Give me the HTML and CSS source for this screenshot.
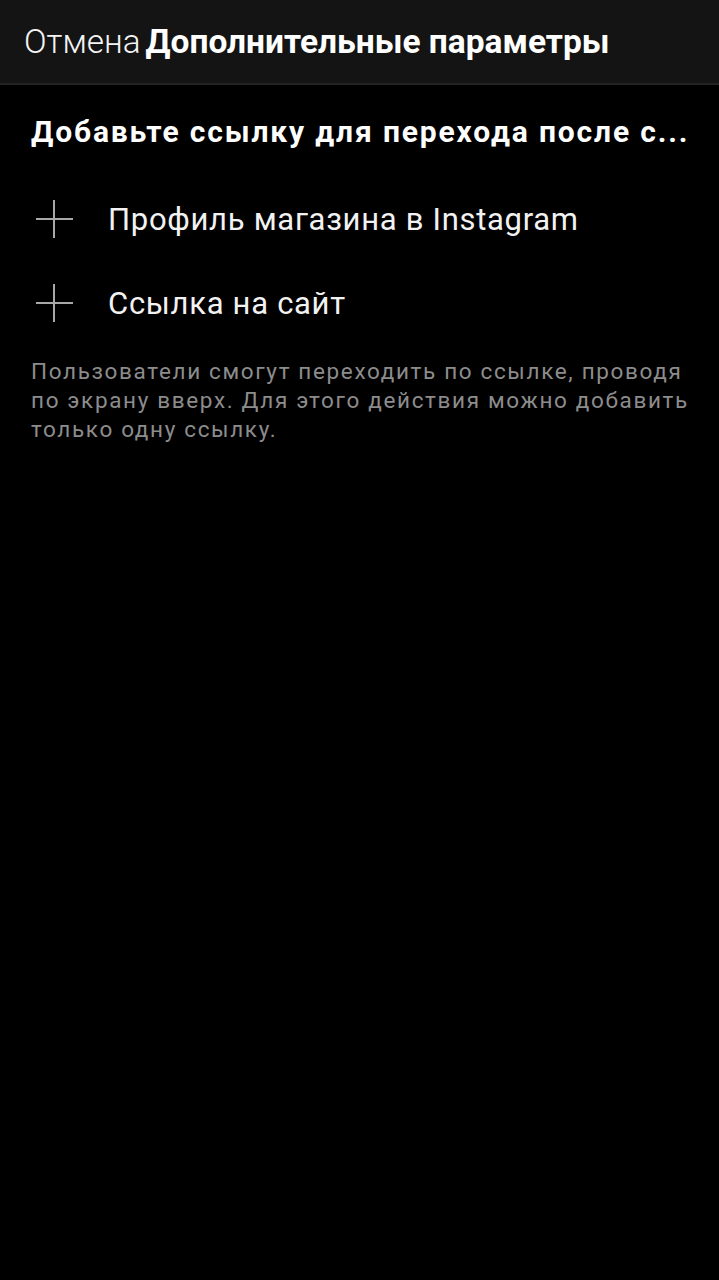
FILE: index.html
```html
<!DOCTYPE html>
<html lang="ru">
<head>
    <meta charset="utf-8">
    <meta name="viewport" content="width=device-width, initial-scale=1.0">
    <title>Дополнительные параметры</title>
    <link rel="stylesheet" href="styles.css">
</head>
<body>
    <header class="topbar">
        <span class="cancel">Отмена</span>
        <h1 class="title">Дополнительные параметры</h1>
    </header>
    <main class="content">
        <h2 class="section-title">Добавьте ссылку для перехода после с...</h2>

        <ul class="links">
            <li class="link-row">
                <span class="plus"></span>
                <span class="link-label">Профиль магазина в Instagram</span>
            </li>
            <li class="link-row">
                <span class="plus"></span>
                <span class="link-label">Ссылка на сайт</span>
            </li>
        </ul>

        <p class="hint">Пользователи смогут переходить по ссылке, проводя по экрану вверх. Для этого действия можно добавить только одну ссылку.</p>
    </main>
</body>
</html>
```

FILE: styles.css
```css
* {
    margin: 0;
    padding: 0;
    box-sizing: border-box;
}

html, body {
    background-color: #000;
    height: 100%;
}

body {
    font-family: Roboto, "Liberation Sans", sans-serif;
    color: #f2f2f2;
}

/* Top bar */
.topbar {
    display: flex;
    align-items: center;
    gap: 5px;
    height: 85px;
    padding: 0 24px 0;
    background-color: #141414;
    border-bottom: 2px solid #232323;
}

.cancel {
    font-size: 33.3px;
    font-weight: 300;
    color: #f4f4f4;
}

.title {
    font-size: 33.5px;
    font-weight: 700;
    color: #fff;
}

/* Content */
.content {
    padding: 27px 31px 0;
}

.section-title {
    font-size: 30px;
    font-weight: 700;
    letter-spacing: 1.85px;
    color: #fff;
    white-space: nowrap;
    line-height: 40px;
}

.links {
    list-style: none;
    margin-top: 25px;
}

.link-row {
    display: flex;
    align-items: center;
    height: 84px;
}

.plus {
    position: relative;
    width: 37px;
    height: 38px;
    margin-left: 5px;
    margin-right: 35px;
    flex-shrink: 0;
}

.plus::before,
.plus::after {
    content: "";
    position: absolute;
    background-color: #a8a8a8;
}

.plus::before {
    left: 0;
    right: 0;
    top: 18px;
    height: 2px;
}

.plus::after {
    top: 0;
    bottom: 0;
    left: 17px;
    width: 2px;
}

.link-label {
    font-size: 31px;
    font-weight: 400;
    letter-spacing: 0.7px;
    color: #f2f2f2;
}

.hint {
    margin-top: 12px;
    margin-right: -14px;
    font-size: 22.5px;
    line-height: 29px;
    letter-spacing: 1.65px;
    color: #8c8c8c;
}
```
